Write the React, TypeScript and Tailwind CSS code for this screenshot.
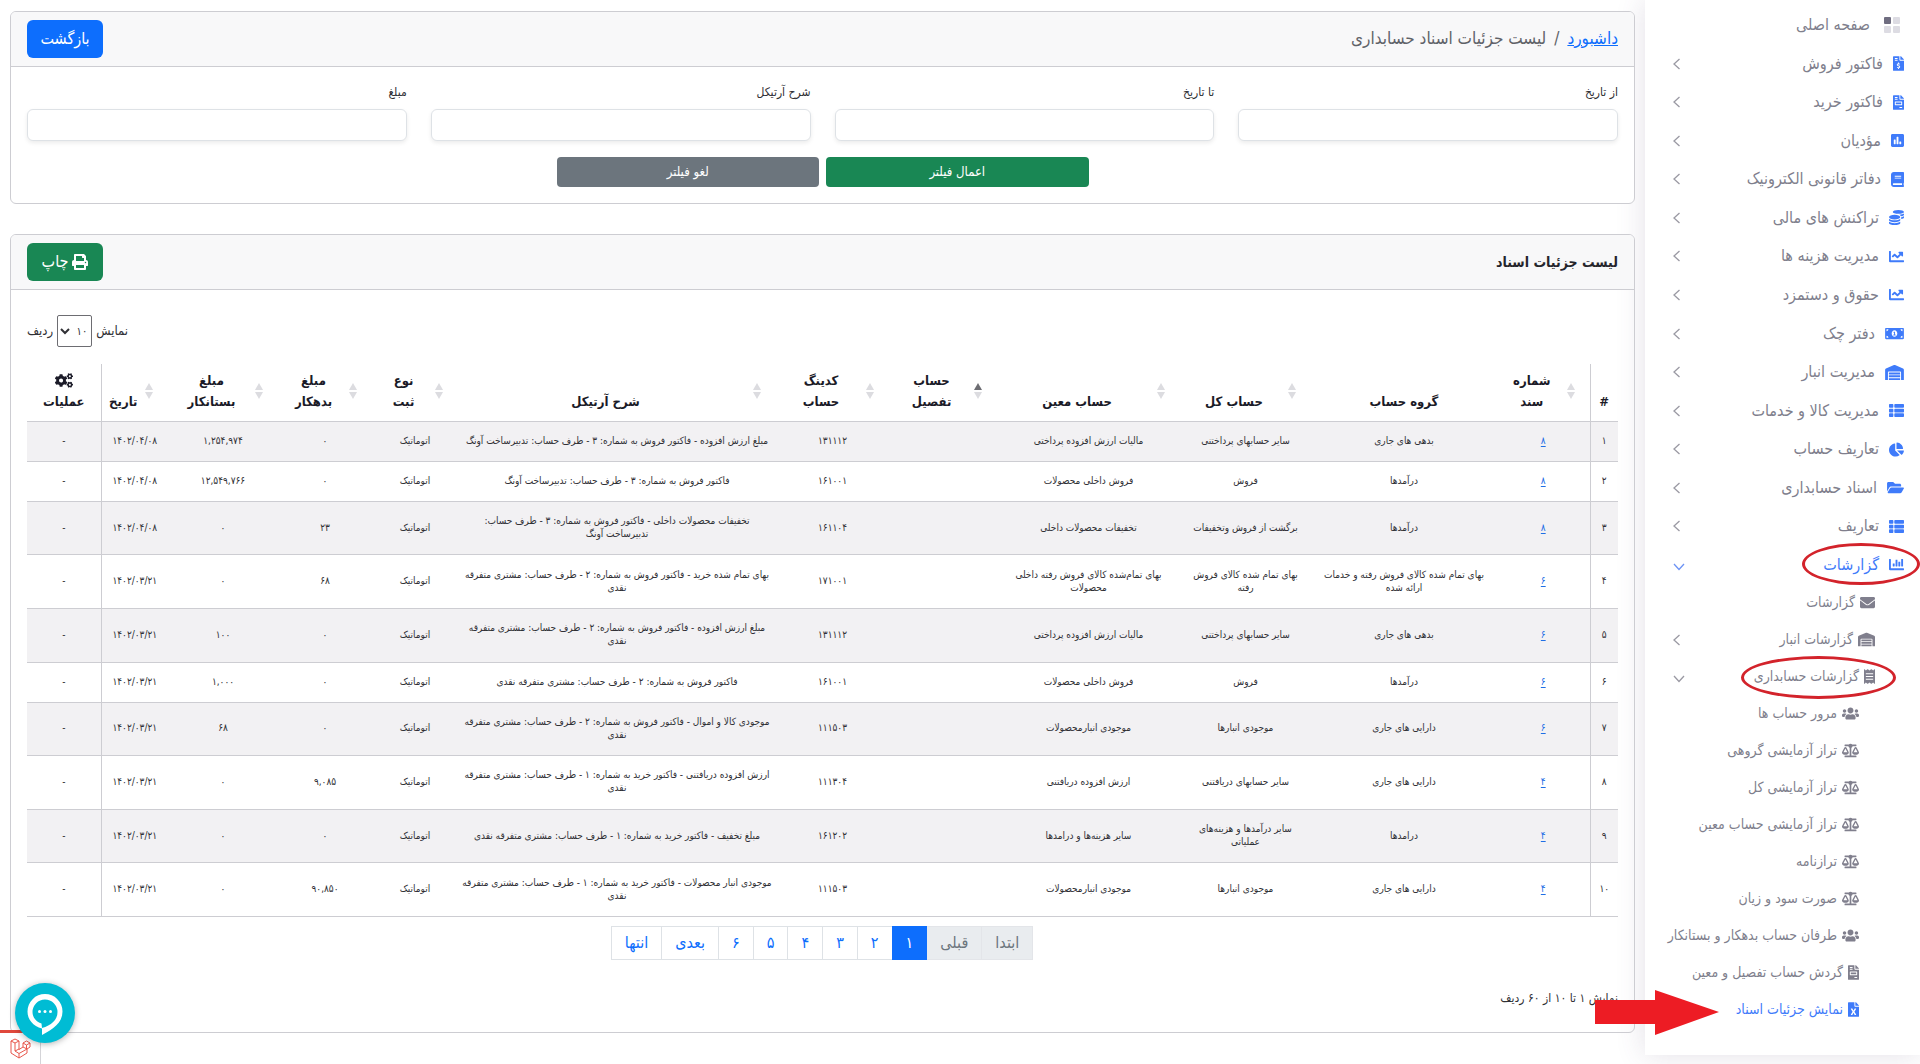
import React, { FC } from 'react'
import { IconType } from 'react-icons'
import {
    FaBalanceScale,
    FaBook,
    FaChartBar,
    FaChartLine,
    FaChartPie,
    FaCogs,
    FaCoins,
    FaEnvelope,
    FaFileExcel,
    FaFileInvoice,
    FaFileInvoiceDollar,
    FaFolderOpen,
    FaMoneyBillAlt,
    FaPoll,
    FaPrint,
    FaReceipt,
    FaThList,
    FaUsers,
    FaWarehouse,
} from 'react-icons/fa'

type Chevron = 'left' | 'down'

interface NavItem {
    label: string
    icon: IconType
    size: string
    level?: 2 | 3
    chevron?: Chevron
    active?: boolean
    ringed?: boolean
}

const NARROW = 'h-[15px] w-[11px]'
const MEDIUM = 'h-[15px] w-[13px]'
const SQUARE = 'size-[15px]'
const BROAD = 'h-[15px] w-[17px]'
const WIDE = 'h-[15px] w-[19px]'

const mainNav: NavItem[] = [
    { label: 'فاکتور فروش', icon: FaFileInvoiceDollar, size: NARROW, chevron: 'left' },
    { label: 'فاکتور خرید', icon: FaFileInvoice, size: NARROW, chevron: 'left' },
    { label: 'مؤدیان', icon: FaPoll, size: MEDIUM, chevron: 'left' },
    { label: 'دفاتر قانونی الکترونیک', icon: FaBook, size: MEDIUM, chevron: 'left' },
    { label: 'تراکنش های مالی', icon: FaCoins, size: SQUARE, chevron: 'left' },
    { label: 'مدیریت هزینه ها', icon: FaChartLine, size: SQUARE, chevron: 'left' },
    { label: 'حقوق و دستمزد', icon: FaChartLine, size: SQUARE, chevron: 'left' },
    { label: 'دفتر چک', icon: FaMoneyBillAlt, size: WIDE, chevron: 'left' },
    { label: 'مدیریت انبار', icon: FaWarehouse, size: WIDE, chevron: 'left' },
    { label: 'مدیریت کالا و خدمات', icon: FaThList, size: SQUARE, chevron: 'left' },
    { label: 'تعاریف حساب', icon: FaChartPie, size: SQUARE, chevron: 'left' },
    { label: 'اسناد حسابداری', icon: FaFolderOpen, size: BROAD, chevron: 'left' },
    { label: 'تعاریف', icon: FaThList, size: SQUARE, chevron: 'left' },
    { label: 'گزارشات', icon: FaChartBar, size: SQUARE, chevron: 'down', active: true, ringed: true },
]

const reportNav: NavItem[] = [
    { label: 'گزارشات', icon: FaEnvelope, size: SQUARE, level: 2 },
    { label: 'گزارشات انبار', icon: FaWarehouse, size: BROAD, level: 2, chevron: 'left' },
    { label: 'گزارشات حسابداری', icon: FaReceipt, size: NARROW, level: 2, chevron: 'down', ringed: true },
    { label: 'مرور حساب ها', icon: FaUsers, size: BROAD, level: 3 },
    { label: 'تراز آزمایشی گروهی', icon: FaBalanceScale, size: BROAD, level: 3 },
    { label: 'تراز آزمایشی کل', icon: FaBalanceScale, size: BROAD, level: 3 },
    { label: 'تراز آزمایشی حساب معین', icon: FaBalanceScale, size: BROAD, level: 3 },
    { label: 'ترازنامه', icon: FaBalanceScale, size: BROAD, level: 3 },
    { label: 'صورت سود و زیان', icon: FaBalanceScale, size: BROAD, level: 3 },
    { label: 'طرفان حساب بدهکار و بستانکار', icon: FaUsers, size: BROAD, level: 3 },
    { label: 'گردش حساب تفصیل و معین', icon: FaFileInvoice, size: NARROW, level: 3 },
    { label: 'نمایش جزئیات اسناد', icon: FaFileExcel, size: NARROW, level: 3, active: true },
]

interface Column {
    lines: string[]
    width: string
    sort?: 'both' | 'asc'
}

const columns: Column[] = [
    { lines: ['#'], width: 'w-[28px]' },
    { lines: ['شماره', 'سند'], width: 'w-[93px]', sort: 'both' },
    { lines: ['گروه حساب'], width: 'w-[186px]' },
    { lines: ['حساب کل'], width: 'w-[131px]', sort: 'both' },
    { lines: ['حساب معین'], width: 'w-[183px]', sort: 'both' },
    { lines: ['حساب', 'تفصیل'], width: 'w-[108px]', sort: 'asc' },
    { lines: ['کدینگ', 'حساب'], width: 'w-[113px]', sort: 'both' },
    { lines: ['شرح آرتیکل'], width: 'w-[318px]', sort: 'both' },
    { lines: ['نوع', 'ثبت'], width: 'w-[86px]', sort: 'both' },
    { lines: ['مبلغ', 'بدهکار'], width: 'w-[94px]', sort: 'both' },
    { lines: ['مبلغ', 'بستانکار'], width: 'w-[110px]', sort: 'both' },
    { lines: ['تاریخ'], width: 'w-[67px]', sort: 'both' },
    { lines: ['عملیات'], width: 'w-[74px]' },
]

// ردیف، سند، گروه، کل، معین، تفصیل، کدینگ، شرح، نوع، بدهکار، بستانکار، تاریخ، عملیات
const rows: string[][] = [
    ['۱', '۸', 'بدهی های جاری', 'سایر حسابهای پرداختنی', 'مالیات ارزش افزوده پرداختی', '', '۱۳۱۱۱۲', 'مبلغ ارزش افزوده - فاکتور فروش به شماره: ۳ - طرف حساب: تدبیرساخت آونگ', 'اتوماتیک', '۰', '۱,۲۵۴,۹۷۴', '۱۴۰۲/۰۴/۰۸', '-'],
    ['۲', '۸', 'درآمدها', 'فروش', 'فروش داخلی محصولات', '', '۱۶۱۰۰۱', 'فاکتور فروش به شماره: ۳ - طرف حساب: تدبیرساخت آونگ', 'اتوماتیک', '۰', '۱۲,۵۴۹,۷۶۶', '۱۴۰۲/۰۴/۰۸', '-'],
    ['۳', '۸', 'درآمدها', 'برگشت از فروش وتخفیفات', 'تخفیفات محصولات داخلی', '', '۱۶۱۱۰۴', 'تخفیفات محصولات داخلی - فاکتور فروش به شماره: ۳ - طرف حساب:\nتدبیرساخت آونگ', 'اتوماتیک', '۲۳', '۰', '۱۴۰۲/۰۴/۰۸', '-'],
    ['۴', '۶', 'بهای تمام شده کالای فروش رفته و خدمات\nارائه شده', 'بهای تمام شده کالای فروش\nرفته', 'بهای تمام‌شده کالای فروش رفته داخلی\nمحصولات', '', '۱۷۱۰۰۱', 'بهای تمام شده خرید - فاکتور فروش به شماره: ۲ - طرف حساب: مشتری متفرقه\nنقدی', 'اتوماتیک', '۶۸', '۰', '۱۴۰۲/۰۳/۲۱', '-'],
    ['۵', '۶', 'بدهی های جاری', 'سایر حسابهای پرداختنی', 'مالیات ارزش افزوده پرداختی', '', '۱۳۱۱۱۲', 'مبلغ ارزش افزوده - فاکتور فروش به شماره: ۲ - طرف حساب: مشتری متفرقه\nنقدی', 'اتوماتیک', '۰', '۱۰۰', '۱۴۰۲/۰۳/۲۱', '-'],
    ['۶', '۶', 'درآمدها', 'فروش', 'فروش داخلی محصولات', '', '۱۶۱۰۰۱', 'فاکتور فروش به شماره: ۲ - طرف حساب: مشتری متفرقه نقدی', 'اتوماتیک', '۰', '۱,۰۰۰', '۱۴۰۲/۰۳/۲۱', '-'],
    ['۷', '۶', 'دارایی های جاری', 'موجودی انبارها', 'موجودی انبارمحصولات', '', '۱۱۱۵۰۳', 'موجودی کالا و اموال - فاکتور فروش به شماره: ۲ - طرف حساب: مشتری متفرقه\nنقدی', 'اتوماتیک', '۰', '۶۸', '۱۴۰۲/۰۳/۲۱', '-'],
    ['۸', '۴', 'دارایی های جاری', 'سایر حسابهای دریافتنی', 'ارزش افزوده دریافتنی', '', '۱۱۱۳۰۴', 'ارزش افزوده دریافتنی - فاکتور خرید به شماره: ۱ - طرف حساب: مشتری متفرقه\nنقدی', 'اتوماتیک', '۹,۰۸۵', '۰', '۱۴۰۲/۰۳/۲۱', '-'],
    ['۹', '۴', 'درامدها', 'سایر درآمدها و هزینه‌های\nعملیاتی', 'سایر هزینه‌ها و درامدها', '', '۱۶۱۲۰۲', 'مبلغ تخفیف - فاکتور خرید به شماره: ۱ - طرف حساب: مشتری متفرقه نقدی', 'اتوماتیک', '۰', '۰', '۱۴۰۲/۰۳/۲۱', '-'],
    ['۱۰', '۴', 'دارایی های جاری', 'موجودی انبارها', 'موجودی انبارمحصولات', '', '۱۱۱۵۰۳', 'موجودی انبار محصولات - فاکتور خرید به شماره: ۱ - طرف حساب: مشتری متفرقه\nنقدی', 'اتوماتیک', '۹۰,۸۵۰', '۰', '۱۴۰۲/۰۳/۲۱', '-'],
]

const filters = [
    { id: 'from', label: 'از تاریخ' },
    { id: 'to', label: 'تا تاریخ' },
    { id: 'description', label: 'شرح آرتیکل' },
    { id: 'amount', label: 'مبلغ' },
]

const pages = ['ابتدا', 'قبلی', '۱', '۲', '۳', '۴', '۵', '۶', 'بعدی', 'انتها']

const NavChevron: FC<{ direction: Chevron; active?: boolean }> = ({ direction, active }) => (
    <svg
        className={`ml-7 shrink-0 ${active ? 'text-[#6d93f5]' : 'text-[#9a99a3]'}`}
        width="12"
        height="12"
        viewBox="0 0 12 12"
        fill="none"
        stroke="currentColor"
        strokeWidth="1.3"
    >
        <path d={direction === 'left' ? 'M6.500 1 1 6l5.500 5' : 'M1 5l5 5.500L11 5'} />
    </svg>
)

const NavLink: FC<{ item: NavItem }> = ({ item }) => {
    const { label, icon: Icon, size, level, chevron, active, ringed } = item
    const indent = level === 3 ? 'pr-[61px]' : level === 2 ? 'pr-[45px]' : 'pr-4'
    const color = active ? 'text-[#3f7bfa]' : 'text-[#807f8d]'

    return (
        <li className="relative flex h-full">
            <a
                href="#"
                className={`flex w-full items-center justify-between ${indent} ${color} ${level ? 'text-[14px]' : 'text-[16px]'}`}
            >
                <span className={`flex items-center whitespace-nowrap ${level ? 'gap-[5px]' : 'gap-[10px]'}`}>
                    <Icon className={`${size} ${level ? '' : 'text-[#3f7bfa]'}`} />
                    {label}
                </span>
                {chevron && <NavChevron direction={chevron} active={active} />}
            </a>
            {ringed && (
                <span
                    className={`pointer-events-none absolute rounded-[50%] border-[3px] border-[#d3232b] ${
                        level ? '-top-[2px] right-6 h-[43px] w-[155px]' : '-top-[2px] right-0 h-[42px] w-[118px]'
                    }`}
                />
            )}
        </li>
    )
}

const Sidebar: FC = () => (
    <aside className="w-[275px] shrink-0 self-start bg-white pt-[6px] pb-[27px] shadow-[0_0_28px_rgba(82,63,105,0.16)]">
        <nav>
            <ul className="grid h-[578px] auto-rows-fr">
                <li className="flex">
                    <a href="#" className="flex w-full items-center gap-[14px] pr-5 text-[16px] text-[#807f8d]">
                        <svg width="16" height="16" viewBox="0 0 16 16" fill="#dddce3">
                            <rect x="9" width="7" height="7" rx="1" />
                            <rect width="7" height="7" rx="1" fill="#6f6d80" />
                            <rect y="9" width="7" height="7" rx="1" />
                            <rect x="9" y="9" width="7" height="7" rx="1" />
                        </svg>
                        صفحه اصلی
                    </a>
                </li>
                {mainNav.map((item) => (
                    <NavLink key={item.label} item={item} />
                ))}
            </ul>
            <ul className="grid auto-rows-[37px]">
                {reportNav.map((item) => (
                    <NavLink key={item.label} item={item} />
                ))}
            </ul>
        </nav>
    </aside>
)

const SortArrows: FC<{ sort: 'both' | 'asc' }> = ({ sort }) => (
    <svg className="shrink-0 self-center" width="8" height="16" viewBox="0 0 8 16" fill="#dcdce0">
        <path d="M4 0l4 7H0z" fill={sort === 'asc' ? '#6d6d72' : undefined} />
        <path d="M0 9h8l-4 7z" />
    </svg>
)

const DocumentsTable: FC = () => (
    <table className="h-[553px] w-full table-fixed border-collapse text-center text-[#303035]">
        <colgroup>
            {columns.map((column) => (
                <col key={column.lines.join()} className={column.width} />
            ))}
        </colgroup>
        <thead>
            <tr className="border-b border-[#cdcdd2] text-[13px] leading-[21px] font-bold text-[#1b1b28]">
                {columns.map((column, index) => (
                    <th
                        key={column.lines.join()}
                        scope="col"
                        aria-sort={column.sort === 'asc' ? 'ascending' : undefined}
                        className="border-[#cdcdd2] pt-[6px] pb-[9px] align-bottom first:border-l last:border-r"
                    >
                        {column.sort ? (
                            <button className="flex w-full items-end pr-[15px]">
                                <SortArrows sort={column.sort} />
                                <span className="flex min-h-[42px] flex-1 flex-col justify-end whitespace-nowrap">
                                    {column.lines.map((line) => (
                                        <span key={line}>{line}</span>
                                    ))}
                                </span>
                            </button>
                        ) : (
                            <>
                                {index === columns.length - 1 && <FaCogs className="mx-auto mb-[3px] h-[15px] w-[18px]" />}
                                {column.lines[0]}
                            </>
                        )}
                    </th>
                ))}
            </tr>
        </thead>
        <tbody className="text-[10px] leading-[13px]">
            {rows.map((row) => (
                <tr key={row[0]} className="border-b border-[#cdcdd2] odd:bg-[#f2f1f3]">
                    {row.map((cell, index) => (
                        <td
                            key={index}
                            className="border-[#cdcdd2] pt-[11px] pb-[13px] whitespace-pre first:border-l last:border-r"
                        >
                            {index === 1 ? (
                                <a href="#" className="text-[#1f6fe5] underline underline-offset-2">
                                    {cell}
                                </a>
                            ) : (
                                cell
                            )}
                        </td>
                    ))}
                </tr>
            ))}
        </tbody>
    </table>
)

const Pagination: FC = () => (
    <nav aria-label="صفحه‌بندی" className="mt-[9px] flex justify-center text-[16px] leading-6">
        {pages.map((page, index) => {
            const disabled = index < 2
            const current = page === '۱'
            return (
                <button
                    key={page}
                    disabled={disabled}
                    aria-current={current ? 'page' : undefined}
                    className={`-ml-px border px-[13px] py-1 ${
                        current
                            ? 'z-10 border-[#0d6efd] bg-[#0d6efd] text-white'
                            : disabled
                              ? 'border-[#e3e5e9] bg-[#e9ecef] text-[#6c757d]'
                              : 'border-[#dee2e6] bg-white text-[#0d6efd]'
                    }`}
                >
                    {page}
                </button>
            )
        })}
    </nav>
)

const FilterCard: FC = () => (
    <section className="overflow-hidden rounded-md border border-[#cdcdd2] bg-white">
        <header className="flex items-center justify-between border-b border-[#cdcdd2] bg-[#f8f8f9] px-4 py-2">
            <ol className="flex gap-2 text-[17px]">
                <li>
                    <a href="#" className="text-[#0d6efd] underline">
                        داشبورد
                    </a>
                </li>
                <li className="text-[#5f6268]">/</li>
                <li className="text-[#5f6268]">لیست جزئیات اسناد حسابداری</li>
            </ol>
            <button className="h-[38px] w-[76px] rounded-md bg-[#0d6efd] text-[16px] text-white">بازگشت</button>
        </header>
        <form className="px-4 pt-4 pb-4">
            <div className="grid grid-cols-4 gap-6">
                {filters.map((filter) => (
                    <div key={filter.id}>
                        <label htmlFor={filter.id} className="mb-2 block text-[12px] leading-[18px] text-[#303035]">
                            {filter.label}
                        </label>
                        <input
                            id={filter.id}
                            type="text"
                            className="block h-8 w-full rounded-md border border-[#dee2e6] bg-white px-2 text-[12px] shadow-[0_2px_4px_rgba(0,0,0,0.08)]"
                        />
                    </div>
                ))}
            </div>
            <div className="mt-4 flex justify-center gap-[7px] text-[13px] text-white">
                <button type="submit" className="h-[30px] w-[16.5%] rounded bg-[#198754]">
                    اعمال فیلتر
                </button>
                <button type="reset" className="h-[30px] w-[16.5%] rounded bg-[#6c757d]">
                    لغو فیلتر
                </button>
            </div>
        </form>
    </section>
)

const ListCard: FC = () => (
    <section className="mt-[30px] overflow-hidden rounded-md border border-[#cdcdd2]">
        <header className="flex items-center justify-between border-b border-[#cdcdd2] bg-[#f8f8f9] px-4 py-2">
            <h1 className="text-[14px] font-bold text-[#25252c]">لیست جزئیات اسناد</h1>
            <button className="flex h-[38px] w-[76px] items-center justify-center gap-1 rounded-md bg-[#198754] text-[16px] text-white">
                <FaPrint className="h-4 w-4" />
                چاپ
            </button>
        </header>
        <div className="px-4 pt-[25px] pb-[25px]">
            <label className="mb-[17px] flex items-center justify-end gap-1 text-[13px] text-[#303035]">
                نمایش
                <select className="h-8 w-[35px] rounded-[2px] border border-[#6d6d72] bg-white text-[11px]">
                    <option>۱۰</option>
                    <option>۲۵</option>
                    <option>۵۰</option>
                </select>
                ردیف
            </label>
            <DocumentsTable />
            <Pagination />
            <p className="mt-[29px] text-[12px] leading-[18px] text-[#303035]">نمایش ۱ تا ۱۰ از ۶۰ ردیف</p>
        </div>
    </section>
)

const ChatButton: FC = () => (
    <button
        aria-label="گفتگو"
        className="fixed bottom-[21px] left-[15px] z-20 size-[60px] rounded-full bg-[#00bcd4] shadow-[0_1px_6px_rgba(0,0,0,0.3)]"
    >
        <svg viewBox="0 0 60 60">
            <path
                fill="#fff"
                fillRule="evenodd"
                d="M30 11a17.500 17.500 0 0 1 17.500 17.500C47.500 40 38 46 27 52V45.500C18 43 12.500 36.500 12.500 28.500A17.500 17.500 0 0 1 30 11zM30 16.500A12.500 12.500 0 0 0 17.500 29c0 5.500 3.500 9.500 9 11.500l.5 4.500c9-2.500 15.500-8 15.500-16A12.500 12.500 0 0 0 30 16.500z"
            />
            <g fill="#fff">
                <circle cx="24.500" cy="28.500" r="1.500" />
                <circle cx="30" cy="28.500" r="1.500" />
                <circle cx="35.500" cy="28.500" r="1.500" />
            </g>
        </svg>
    </button>
)

const DebugTab: FC = () => (
    <button
        aria-label="Laravel"
        className="fixed bottom-0 left-0 z-10 flex h-[34px] w-[41px] items-center justify-center border-t-[3px] border-r border-t-[#e0483c] border-r-[#d4d4d8] bg-white"
    >
        <svg width="21" height="21" viewBox="0 0 21 21" fill="none" stroke="#e8574c" strokeWidth="1" strokeLinejoin="round">
            <path d="M1 3v12l8 5 8-5v-4l3-2V5l-3.500-2L13 5v4l-4 2.500V3L5 1zM1 3l4 2 4-2M5 5v8l4 2.500 8-4.500M9 15.500V20M13 5l3.500 2L20 5M16.500 7v4M13 9l4 2M5 13l4-2" />
        </svg>
    </button>
)

const App: FC = () => (
    <div dir="rtl" className="relative overflow-hidden bg-white font-['DejaVu_Sans_Condensed','DejaVu_Sans',sans-serif]">
        <div className="flex min-h-screen">
            <Sidebar />
            <main className="min-w-0 flex-1 px-[10px] pt-[11px] pb-[31px]">
                <FilterCard />
                <ListCard />
            </main>
        </div>
        <svg
            className="pointer-events-none absolute top-[990px] right-[201px]"
            width="124"
            height="45"
            viewBox="0 0 124 45"
            fill="#ed1c24"
        >
            <path d="M0 10h60V0l64 22-64 23V34H0z" />
        </svg>
        <ChatButton />
        <DebugTab />
    </div>
)

export default App
